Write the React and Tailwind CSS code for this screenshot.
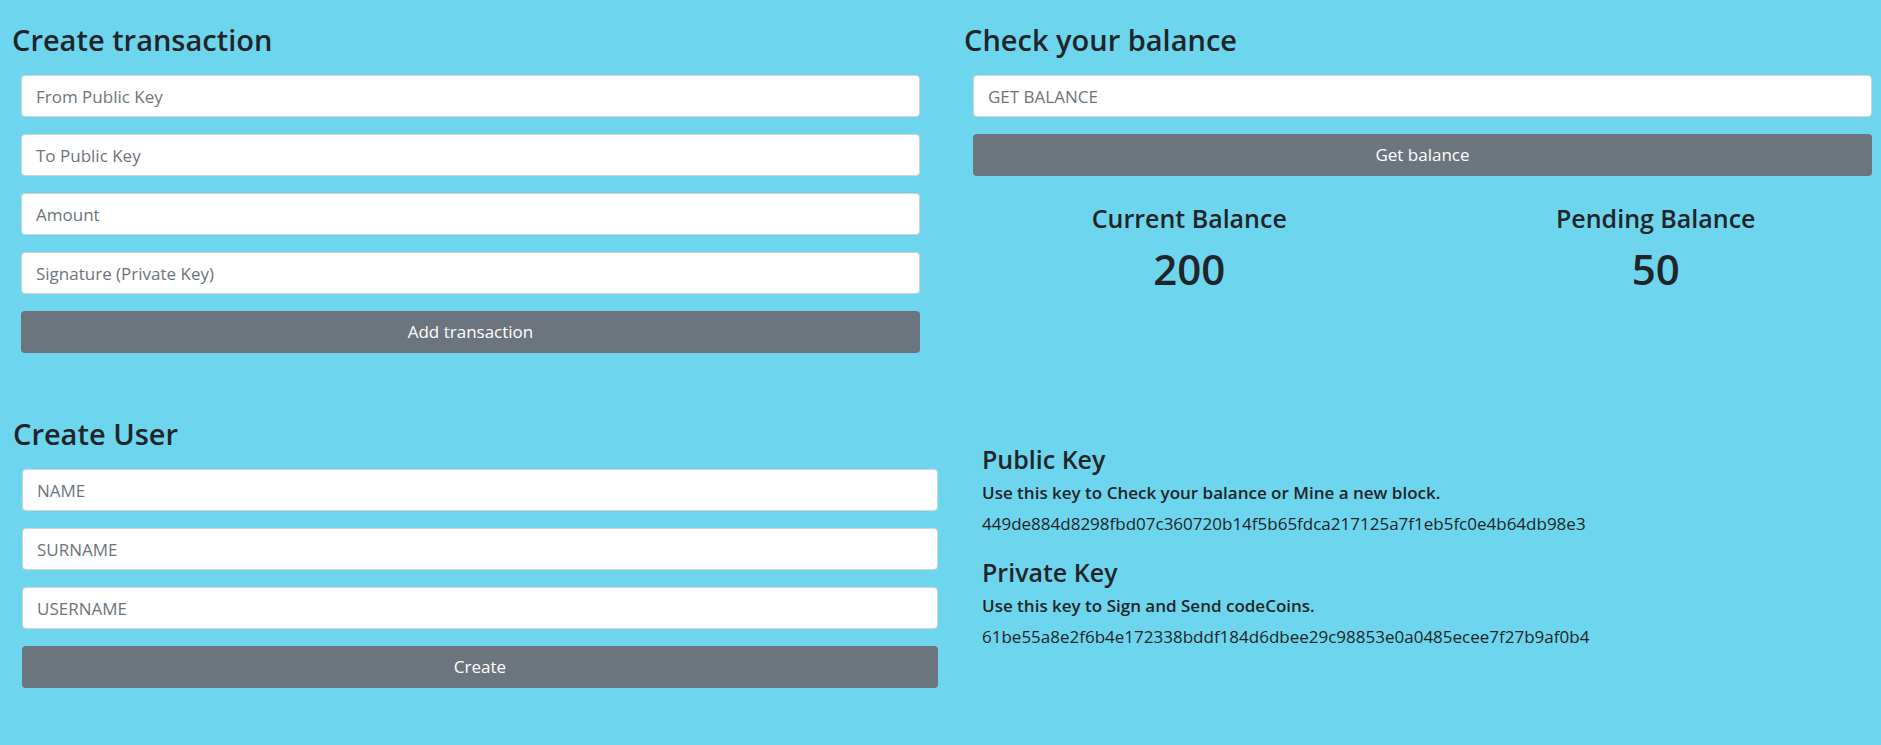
const fieldClass =
  "block h-[42px] w-full rounded border border-[#ced4da] bg-white px-3.5 text-[17px] text-[#495057] placeholder:text-[#6c757d] focus:outline-2 focus:outline-[#80bdff]";

function Field({ label, type = "text" }) {
  return <input type={type} aria-label={label} placeholder={label} className={fieldClass} />;
}

function SubmitButton({ children }) {
  return (
    <button
      type="submit"
      className="block h-[42px] w-full cursor-pointer rounded bg-[#6c757d] px-3 text-center text-[17px] text-white hover:bg-[#5a6268]"
    >
      {children}
    </button>
  );
}

function FormPanel({ title, fields, action }) {
  return (
    <section>
      <h2 className="mb-[17px] text-[29px] leading-9 font-semibold">{title}</h2>
      <form className="flex flex-col gap-[17px] px-[9px]" onSubmit={(event) => event.preventDefault()}>
        {fields.map((label) => (
          <Field key={label} label={label} />
        ))}
        <SubmitButton>{action}</SubmitButton>
      </form>
    </section>
  );
}

function Balance({ label, value }) {
  return (
    <div>
      <h3 className="text-[25px] leading-8 font-semibold">{label}</h3>
      <p className="mt-2 text-[42px] leading-[53px] font-semibold">{value}</p>
    </div>
  );
}

function KeyBlock({ title, hint, value }) {
  return (
    <div>
      <h3 className="text-[25px] leading-8 font-semibold">{title}</h3>
      <p className="mt-0.5 text-[17px] leading-[31px] font-semibold">{hint}</p>
      <p className="text-[17px] leading-[31px] break-all">{value}</p>
    </div>
  );
}

export default function App() {
  return (
    <main className="min-h-screen overflow-x-clip bg-[#6dd6ee] pt-[22px] pb-14 font-['Open_Sans','Noto_Sans',sans-serif] text-[#212529]">
      <div className="grid grid-cols-2 gap-x-[35px] pl-3">
        <FormPanel
          title="Create transaction"
          fields={["From Public Key", "To Public Key", "Amount", "Signature (Private Key)"]}
          action="Add transaction"
        />
        <div>
          <FormPanel title="Check your balance" fields={["GET BALANCE"]} action="Get balance" />
          <div className="-mx-2 mt-[26px] grid grid-cols-2 text-center">
            <Balance label="Current Balance" value="200" />
            <Balance label="Pending Balance" value="50" />
          </div>
        </div>
      </div>
      <div className="mt-[63px] grid grid-cols-[934fr_899fr] gap-x-[35px] pl-[13px]">
        <FormPanel title="Create User" fields={["NAME", "SURNAME", "USERNAME"]} action="Create" />
        <section className="flex flex-col gap-[17px] pt-[27px]">
          <KeyBlock
            title="Public Key"
            hint="Use this key to Check your balance or Mine a new block."
            value="449de884d8298fbd07c360720b14f5b65fdca217125a7f1eb5fc0e4b64db98e3"
          />
          <KeyBlock
            title="Private Key"
            hint="Use this key to Sign and Send codeCoins."
            value="61be55a8e2f6b4e172338bddf184d6dbee29c98853e0a0485ecee7f27b9af0b4"
          />
        </section>
      </div>
    </main>
  );
}
